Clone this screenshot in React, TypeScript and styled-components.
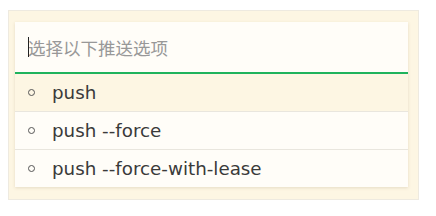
import React from 'react';
import styled, { createGlobalStyle } from 'styled-components';

const options = ['push', 'push --force', 'push --force-with-lease'];

const GlobalStyle = createGlobalStyle`
  html, body {
    margin: 0;
    padding: 0;
    background: #ffffff;
  }
  body {
    font-family: 'DejaVu Sans', 'Noto Sans CJK SC', sans-serif;
  }
`;

function App() {
  const selected = 0;
  return (
    <>
      <GlobalStyle />
      <Page>
        <Panel>
          <Card>
            <InputWrap>
              <Caret />
              <Input placeholder="选择以下推送选项" readOnly />
            </InputWrap>
            <List>
              {options.map((opt, i) => (
                <Item key={opt} active={i === selected}>
                  <Bullet />
                  <Label>{opt}</Label>
                </Item>
              ))}
            </List>
          </Card>
        </Panel>
      </Page>
    </>
  );
}

export default App;

const Page = styled.div`
  width: 436px;
  height: 216px;
  padding: 10px 0 0 8px;
  box-sizing: border-box;
`;
const Panel = styled.div`
  width: 411px;
  height: 190px;
  box-sizing: border-box;
  border: 1px solid #eeeae0;
  background: #fdf6e3;
  padding: 11px 10px 13px 6px;
`;
const Card = styled.div`
  background: #fffdf8;
  box-shadow: 0 1px 3px rgba(120, 100, 60, 0.18);
`;
const InputWrap = styled.div`
  position: relative;
  height: 52px;
  box-sizing: border-box;
  border-bottom: 2px solid #1fb35c;
`;
const Caret = styled.span`
  position: absolute;
  left: 13px;
  top: 15px;
  width: 1px;
  height: 20px;
  background: #222;
`;
const Input = styled.input`
  width: 100%;
  height: 100%;
  box-sizing: border-box;
  border: none;
  outline: none;
  background: transparent;
  padding: 0 0 0 13px;
  font-family: 'Noto Sans CJK SC', sans-serif;
  font-size: 17.5px;
  color: #444;
  caret-color: transparent;
  &::placeholder {
    color: #989898;
  }
`;
const List = styled.div`
  display: flex;
  flex-direction: column;
`;
const Item = styled.div<{ active: boolean }>`
  display: flex;
  align-items: center;
  height: 37px;
  box-sizing: border-box;
  padding-left: 13px;
  background: ${p => (p.active ? '#fdf6e3' : '#fffdf8')};
  & + & {
    height: 38px;
    border-top: 1px solid #e9e6de;
  }
`;
const Bullet = styled.span`
  width: 5px;
  height: 5px;
  border: 1.3px solid #555;
  border-radius: 50%;
  margin-right: 17px;
  flex-shrink: 0;
`;
const Label = styled.span`
  font-family: 'DejaVu Sans', sans-serif;
  font-size: 18.3px;
  color: #3a3a3a;
`;
